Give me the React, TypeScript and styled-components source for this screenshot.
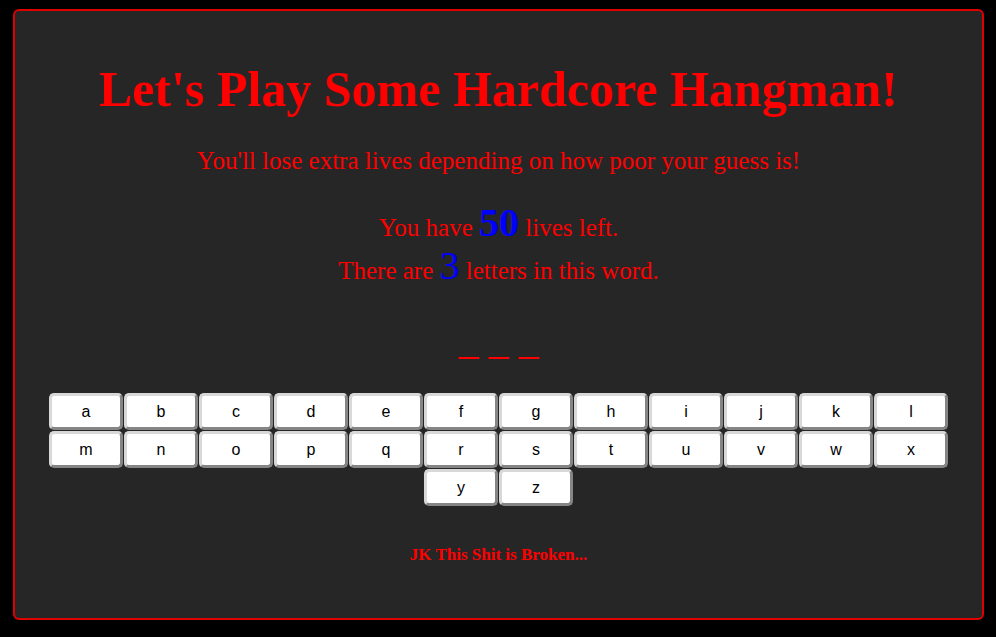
import React from 'react';
import styled, { createGlobalStyle } from 'styled-components';

const GlobalStyle = createGlobalStyle`
  html, body {
    margin: 0;
    padding: 0;
    background: #000000;
  }
  body {
    padding: 9px 12px 16px 13px;
    font-family: "Liberation Serif", "Times New Roman", serif;
  }
`;

const Board = styled.div`
  box-sizing: border-box;
  width: 971px;
  height: 611px;
  background: #272627;
  border: 2px solid #e00000;
  border-radius: 6px;
  display: flex;
  flex-direction: column;
  align-items: center;
  color: #ff0000;
`;

const Title = styled.h1`
  margin: 49px 0 0;
  font-size: 50px;
  font-weight: bold;
  line-height: 58px;
`;

const Subtitle = styled.p`
  margin: 28px 0 0;
  font-size: 25px;
  line-height: 30px;
`;

const Stats = styled.div`
  margin-top: 30px;
  display: flex;
  flex-direction: column;
  align-items: center;
  font-size: 25px;
`;

const StatLine = styled.div`
  line-height: 43px;
`;

const Num = styled.span<{ $bold?: boolean }>`
  color: #0000ff;
  font-size: 40px;
  line-height: 0;
  font-weight: ${(p) => (p.$bold ? 'bold' : 'normal')};
`;

const Blanks = styled.div`
  margin-top: 26px;
  font-size: 40px;
  line-height: 46px;
`;

const Keyboard = styled.div`
  margin-top: 29px;
  width: 902px;
  display: flex;
  flex-wrap: wrap;
  justify-content: center;
  gap: 1px;
`;

const Key = styled.button`
  box-sizing: border-box;
  width: 74px;
  height: 37px;
  background: #ffffff;
  border: 3px solid;
  border-color: #d8d8d8 #858585 #858585 #d8d8d8;
  border-radius: 5px;
  font-family: "Liberation Sans", Arial, sans-serif;
  font-size: 16px;
  color: #000000;
  padding: 0;
  cursor: pointer;
`;

const Footer = styled.h4`
  margin: 39px 0 0;
  font-size: 17px;
  font-weight: bold;
`;

const letters = 'abcdefghijklmnopqrstuvwxyz'.split('');

export default function App() {
  return (
    <>
      <GlobalStyle />
      <Board>
        <Title>Let's Play Some Hardcore Hangman!</Title>
        <Subtitle>You'll lose extra lives depending on how poor your guess is!</Subtitle>
        <Stats>
          <StatLine>
            You have <Num $bold>50</Num> lives left.
          </StatLine>
          <StatLine>
            There are <Num>3</Num> letters in this word.
          </StatLine>
        </Stats>
        <Blanks>_ _ _</Blanks>
        <Keyboard>
          {letters.map((l) => (
            <Key key={l}>{l}</Key>
          ))}
        </Keyboard>
        <Footer>JK This Shit is Broken...</Footer>
      </Board>
    </>
  );
}
